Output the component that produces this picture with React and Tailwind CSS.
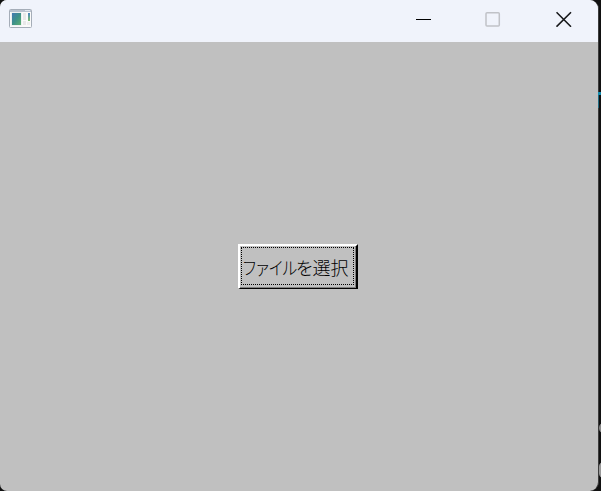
function AppIcon() {
  return (
    <svg width="24" height="20" viewBox="0 0 24 20" className="block">
      <defs>
        <linearGradient id="screen" x1="0" y1="0" x2="1" y2="1">
          <stop offset="0" stopColor="#4478b4" />
          <stop offset="0.5" stopColor="#3d9189" />
          <stop offset="1" stopColor="#5eaf70" />
        </linearGradient>
        <linearGradient id="strip" x1="0" y1="0" x2="0" y2="1">
          <stop offset="0" stopColor="#4a86c0" />
          <stop offset="1" stopColor="#7fc06c" />
        </linearGradient>
      </defs>
      <rect x="0.5" y="0.5" width="22" height="18" rx="1" fill="#fafafa" stroke="#a5adb8" />
      <rect x="1" y="1" width="21" height="2" fill="#b9c2cf" />
      <rect x="16" y="1" width="5" height="1" fill="#e2e7ee" />
      <rect x="2.5" y="3.5" width="10" height="13" fill="#dfe5e6" />
      <rect x="3" y="4" width="9" height="12" fill="url(#screen)" />
      <rect x="14" y="4" width="3" height="7" fill="#e8e8e8" />
      <rect x="14" y="12" width="3" height="4" fill="#e8e8e8" />
      <rect x="19" y="4" width="2" height="8" fill="url(#strip)" />
      <rect x="18" y="13" width="3" height="3" fill="#ededed" />
    </svg>
  );
}

function TitleBar() {
  return (
    <header className="flex h-[42px] shrink-0 items-start justify-between bg-[#f0f3fb]">
      <div className="pt-[9px] pl-[9px]">
        <AppIcon />
      </div>
      <div className="flex pt-[11px] pr-[26px]">
        <button aria-label="Minimize" className="mr-[53px]">
          <svg width="16" height="16" className="block">
            <path d="M0 8.5H15" stroke="#000" />
          </svg>
        </button>
        <button aria-label="Maximize" className="mr-[55px]">
          <svg width="16" height="16" className="block">
            <rect x="1" y="1.7" width="13.3" height="13.3" rx="1" fill="none" stroke="#c0c2c7" strokeWidth="1.5" />
          </svg>
        </button>
        <button aria-label="Close">
          <svg width="16" height="16" className="block">
            <path d="M0.5 1.2L15 15.7M15 1.2L0.5 15.7" stroke="#17181a" strokeWidth="1.6" />
          </svg>
        </button>
      </div>
    </header>
  );
}

export default function App() {
  return (
    <div className="relative h-[491px] w-[601px] overflow-hidden bg-[#111]">
      <div className="relative flex h-[491px] w-[599px] flex-col overflow-hidden rounded-l-[7px] rounded-r-[9px] border-r border-[#3c3c3c] bg-[#c0c0c0]">
        <TitleBar />
        <main className="flex flex-1 items-start justify-center pt-[202px] pr-[2px]">
          <button className="flex h-[45px] w-[120px] border-t-2 border-r-2 border-b border-l-2 border-t-white border-r-black border-b-black border-l-white bg-[#c0c0c0]">
            <span className="flex h-[42px] w-full border-r border-b border-[#808080] pt-px pr-px pb-[2px] pl-px">
              <span className="flex w-full items-center border border-dotted border-black pt-[2px] pl-px font-['Noto_Sans_CJK_JP',sans-serif] text-[18px] leading-[20px] font-light whitespace-nowrap text-black [font-feature-settings:'palt']">
                <span className="w-[53px] origin-left scale-x-[0.87]">ファイル</span>
                <span className="origin-left">を選択</span>
              </span>
            </span>
          </button>
        </main>
      </div>
      <div className="absolute top-[92px] right-0 h-[3px] w-[3px] bg-[#168cae]" />
      <div className="absolute top-[95px] right-[2px] h-[13px] w-px bg-[#1e6a80]" />
      <div className="absolute top-[423px] -right-[7px] h-[10px] w-[9px] rounded-full border-2 border-[#888]" />
      <div className="absolute top-[462px] -right-[7px] h-[16px] w-[9px] rounded-full border-2 border-[#999]" />
    </div>
  );
}
